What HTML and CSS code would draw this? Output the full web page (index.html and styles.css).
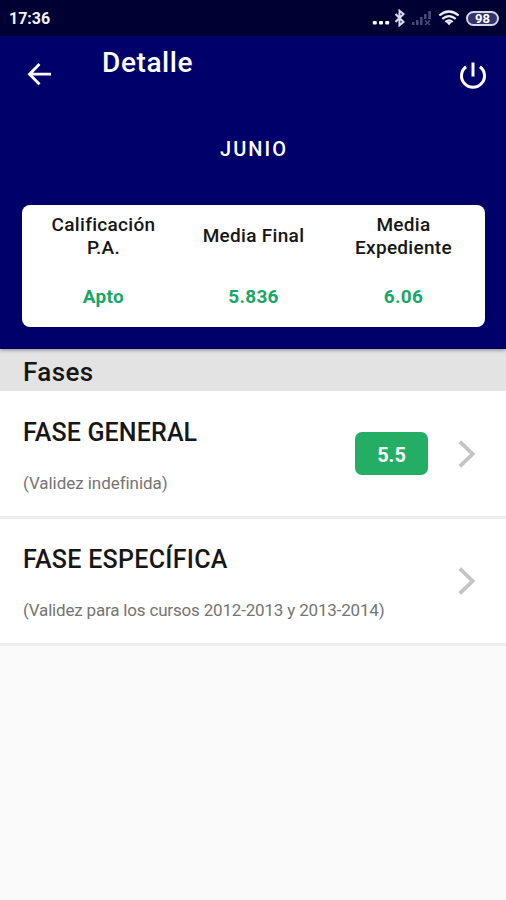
FILE: index.html
```html
<!DOCTYPE html>
<html lang="es">
<head>
<meta charset="utf-8">
<title>Detalle</title>
<link rel="stylesheet" href="styles.css">
</head>
<body>
<div class="status">
  <span class="clock">17:36</span>
  <div class="status-icons">
    <svg class="dots" width="18" height="18" viewBox="0 0 18 18" fill="#fff"><rect x="0.8" y="12" width="4" height="3.600" rx="1"/><rect x="7" y="12" width="4" height="3.600" rx="1"/><rect x="13.2" y="12" width="4" height="3.600" rx="1"/></svg>
    <svg class="bluetooth" width="12" height="18" viewBox="0 0 12 18" fill="none" stroke="#dcdcf0" stroke-width="2"><path d="M1.500 5l8 8-4 3.300V1.700l4 3.300-8 8"/></svg>
    <svg class="signal" width="20" height="18" viewBox="0 0 20 18" fill="#484878"><rect x="0" y="13" width="2.500" height="3"/><rect x="4" y="11" width="2.500" height="5"/><rect x="8" y="8" width="2.500" height="8"/><path d="M12 5h2.500v5H12zM16.300 2h2.700v8h-2.700z"/><path d="M13 11.500l5 4.500M18 11.500l-5 4.500" stroke="#484878" stroke-width="1.500"/></svg>
    <svg class="wifi" width="22" height="18" viewBox="0 0 22 18" fill="none" stroke="#eeeef8" stroke-width="2.200"><path d="M1.300 6.500Q11-1.500 20.700 6.500M4.300 9.900Q11 4.200 17.700 9.900M7.300 13Q11 9.800 14.700 13"/><path d="M8.300 13.300Q11 11.800 13.700 13.300L11 16.300z" fill="#eeeef8" stroke="none"/></svg>
    <span class="battery">98</span>
  </div>
</div>
<header class="header">
  <div class="toolbar">
    <svg class="back" width="26" height="24" viewBox="0 0 26 24" fill="none" stroke="#fff" stroke-width="2.800"><path d="M13.500 2L3.500 12.200l10 10M3.600 12.200H25"/></svg>
    <h1 class="title">Detalle</h1>
    <svg class="power" width="28" height="28" viewBox="0 0 28 28" fill="none" stroke="#fff" stroke-width="3"><path d="M14 0.500v14M7 4.700A11.500 11.500 0 1 0 21 4.700"/></svg>
  </div>
  <div class="period">JUNIO</div>
  <section class="card">
    <div class="cell"><div class="label">Calificación<br>P.A.</div><div class="value">Apto</div></div>
    <div class="cell"><div class="label label-single">Media Final</div><div class="value">5.836</div></div>
    <div class="cell"><div class="label">Media<br>Expediente</div><div class="value">6.06</div></div>
  </section>
</header>
<main>
  <h2 class="section">Fases</h2>
  <article class="row row-first">
    <div class="text"><h3 class="name">FASE GENERAL</h3><p class="note">(Validez indefinida)</p></div>
    <span class="badge">5.5</span>
    <svg class="chevron" width="18" height="28" viewBox="0 0 18 28" fill="none" stroke="#c4c4c4" stroke-width="3.800"><path d="M1.800 1.700L14.600 14 1.800 26.300"/></svg>
  </article>
  <article class="row">
    <div class="text"><h3 class="name name-wide">FASE ESPECÍFICA</h3><p class="note note-tight">(Validez para los cursos 2012-2013 y 2013-2014)</p></div>
    <svg class="chevron" width="18" height="28" viewBox="0 0 18 28" fill="none" stroke="#c4c4c4" stroke-width="3.800"><path d="M1.800 1.700L14.600 14 1.800 26.300"/></svg>
  </article>
</main>
</body>
</html>
```
FILE: styles.css
```css
* { box-sizing: border-box; }
body { margin: 0; min-height: 900px; background: #fafafa; color: #161616; font-family: Roboto, "Liberation Sans", sans-serif; }
h1, h2, h3, p { margin: 0; font-weight: 500; }
svg { display: block; flex: none; }
.status { height: 36px; background: #000033; display: flex; justify-content: space-between; padding: 9px 7px 0 9px; }
.clock { color: #f4f4fa; font-size: 16px; font-weight: 700; line-height: 20px; }
.status-icons { display: flex; }
.bluetooth { margin-left: 4px; }
.signal { margin-left: 6px; }
.wifi { margin-left: 6px; }
.battery { margin: 2px 0 0 6px; width: 33px; height: 15px; border: 2px solid #d4d4ea; border-radius: 8px; background: #34346c; color: #fff; font-size: 13px; font-weight: 700; line-height: 12px; text-align: center; }
.header { height: 313px; background: #00006b; color: #fff; position: relative; box-shadow: 0 1px 4px rgba(0, 0, 0, 0.4); }
.toolbar { height: 76px; display: flex; align-items: flex-start; padding: 0 19px 0 26px; }
.back { margin-top: 26px; }
.title { flex: 1; margin: 9px 0 0 50px; font-size: 28px; line-height: 36px; letter-spacing: 0.6px; }
.power { margin-top: 26px; }
.period { margin-top: 24px; text-align: center; font-size: 20px; font-weight: 500; line-height: 26px; letter-spacing: 2px; padding-left: 2px; }
.card { margin: 43px 21px 0 22px; height: 122px; background: #fff; border-radius: 8px; color: #161616; display: grid; grid-template-columns: repeat(3, 150px); justify-content: center; padding: 8px 0 0; }
.cell { text-align: center; font-size: 19px; font-weight: 500; line-height: 23px; letter-spacing: 0.3px; }
.label { height: 46px; display: flex; align-items: center; justify-content: center; }
.label-single { padding-bottom: 2px; }
.value { margin-top: 26px; color: #17a768; font-weight: 700; }
.section { height: 42px; padding: 5px 23px 0; background: #e3e3e3; font-size: 26px; line-height: 36px; letter-spacing: 0.4px; }
.row { height: 127px; background: #fff; border-bottom: 3px solid #eeeeee; display: flex; align-items: center; padding-right: 30px; }
.row-first { height: 128px; }
.text { flex: 1; padding: 4px 0 0 23px; }
.name { font-size: 25px; line-height: 32px; letter-spacing: 0.15px; }
.name-wide { letter-spacing: 0.3px; }
.note { margin-top: 22px; color: #747474; font-size: 17px; font-weight: 400; line-height: 24px; white-space: nowrap; letter-spacing: -0.05px; }
.note-tight { letter-spacing: -0.18px; }
.badge { width: 73px; height: 43px; margin-right: 30px; border-radius: 7px; background: #24ad65; color: #fff; font-size: 20px; font-weight: 700; line-height: 46px; text-align: center; }
```
